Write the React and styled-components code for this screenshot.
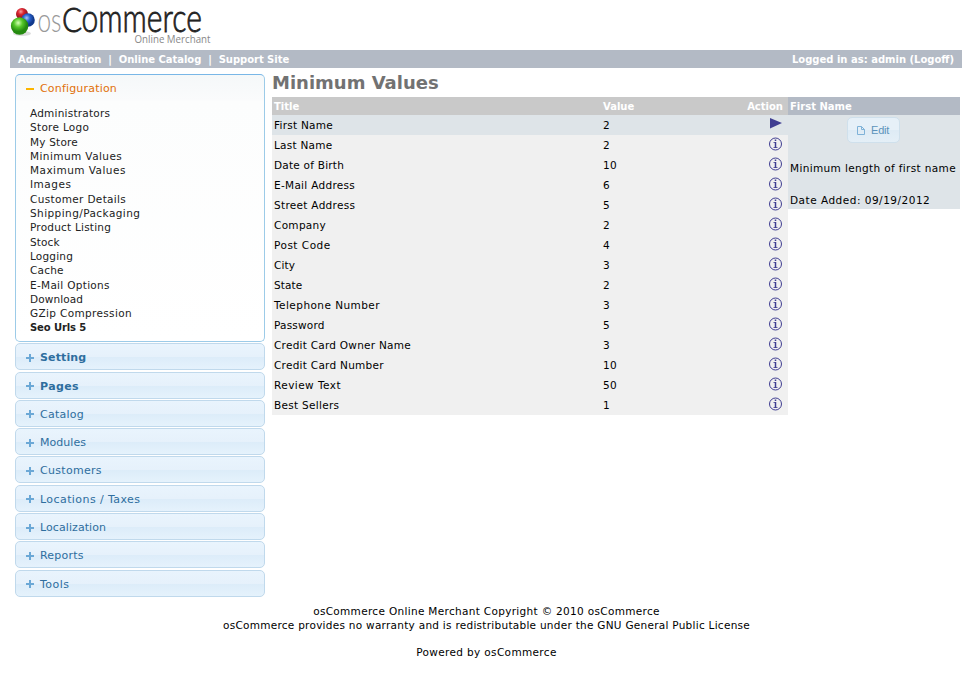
import React from "react";
import styled, { createGlobalStyle } from "styled-components";

const Global = createGlobalStyle`
  * { box-sizing: border-box; }
  body { margin: 0; background: #fff; color: #000; font: 11px/14px "DejaVu Sans", Verdana, sans-serif; }
  h1, ul { margin: 0; padding: 0; }
  ul { list-style: none; }
`;

const Page = styled.div`width: 972px; height: 688px; padding: 0 12px 0 10px; overflow: hidden;`;
const Header = styled.header`height: 50px;`;
const Logo = styled.svg`display: block; width: 210px; height: 50px; overflow: visible;`;
const Bar = styled.nav`
  width: 952px; height: 18px; padding: 0 8px; display: flex; justify-content: space-between;
  background: #b3bac5; color: #fff; font-weight: bold; font-size: 10px; line-height: 19px; white-space: pre;
`;
const BarText = styled.span`letter-spacing: ${p => p.$ls || 0}px;`;
const Body = styled.div`display: flex; height: 529px; padding: 6px 0 0 5px;`;
const Sidebar = styled.aside`width: 250px; margin-right: 7px; flex: none;`;
const Section = styled.section`
  height: 268px; border: 1px solid #9ccbe8; border-top-color: #79b7e7; border-radius: 5px;
  background: linear-gradient(#f5f8f9 0, #fafbfc 25px, #fcfdfd 26px, #fff 100%);
`;
const SectionTitle = styled.div`
  height: 31px; padding: 5px 0 0 10px; display: flex; color: #e17009; font-size: 11px; line-height: 17px; letter-spacing: .18px;
`;
const Sign = styled.svg`width: 8px; height: 8px; margin: ${p => p.$top}px 6px 0 0; flex: none;`;
const Links = styled.ul`padding-left: 14px;`;
const Link = styled.li`
  height: 14.3px; line-height: ${p => (p.$bold ? 16.3 : 14.3)}px; color: #222; font-weight: ${p => (p.$bold ? "bold" : "normal")};
  font-size: ${p => (p.$bold ? 10 : 10.5)}px; letter-spacing: ${p => p.$ls}px; white-space: nowrap;
`;
const Menu = styled.div`
  height: 27px; margin-top: 1.3px; padding: 5px 0 0 10px; display: flex; border: 1px solid #c0d9ec; border-radius: 5px;
  background: linear-gradient(#e9f4fd 0, #e6f1fb 50%, #dcecf9 51%, #e5f2fc 100%);
  color: #2e6e9e; font-size: 11px; line-height: 17px; font-weight: ${p => (p.$bold ? "bold" : "normal")};
  letter-spacing: ${p => p.$ls}px;
`;
const Main = styled.main`width: 688px;`;
const Heading = styled.h1`height: 23px; color: #727272; font-size: 18px; line-height: 18px;`;
const Columns = styled.div`display: flex; align-items: flex-start;`;
const Table = styled.div`width: 516px; font-size: 10.5px;`;
const Row = styled.div`
  display: grid; grid-template-columns: 329px 105px 1fr; height: 20px; padding: 0 5px 0 2px; line-height: 21px;
  background: ${p => (p.$active ? "#dee4e8" : "#f0f0f0")};
`;
const HeadRow = styled(Row)`height: 18px; background: #c9c9c9; color: #fff; font-weight: bold; font-size: 10px; line-height: 19px;`;
const Cell = styled.span`letter-spacing: ${p => p.$ls || 0}px; white-space: nowrap;`;
const Action = styled.span`display: flex; justify-content: flex-end;`;
const ActionIcon = styled.svg`width: 14px; height: 14px; margin-top: 2px;`;
const Info = styled.aside`width: 172px; height: 112px; background: #dee4e8; font-size: 10.5px;`;
const InfoHead = styled.div`height: 18px; padding-left: 2px; background: #b3bac5; color: #fff; font-weight: bold; font-size: 10px; line-height: 19px;`;
const Button = styled.button`
  display: flex; align-items: center; width: 53px; height: 26px; margin: 2px 0 0 59px; padding: 0 0 0 9px; gap: 6px;
  border: 1px solid #cfe0ec; border-radius: 5px; background: linear-gradient(#e6f0f8 0 48%, #deebf5 52%, #e4eff7);
  color: #5b93bb; font: 11px "Liberation Sans", Arial, sans-serif; letter-spacing: -.2px;
`;
const Paper = styled.svg`width: 8px; height: 9px;`;
const InfoText = styled.div`margin: ${p => p.$top}px 0 0 2px; line-height: 14px; letter-spacing: ${p => p.$ls}px; white-space: nowrap;`;
const Footer = styled.footer`width: 953px; padding-top: 7px; text-align: center; font-size: 10.5px; line-height: 14px;`;
const FootLine = styled.div`letter-spacing: ${p => p.$ls}px; margin-top: ${p => p.$top || 0}px;`;

const links = [
  ["Administrators", 0.22], ["Store Logo", 0.3], ["My Store", 0.2], ["Minimum Values", 0.42], ["Maximum Values", 0.46], ["Images", 0.5],
  ["Customer Details", 0.34], ["Shipping/Packaging", 0.43], ["Product Listing", 0.22], ["Stock", 0.1], ["Logging", 0.2], ["Cache", 0.2],
  ["E-Mail Options", 0.3], ["Download", 0.1], ["GZip Compression", 0.35], ["Seo Urls 5", -0.1],
];
const menus = [["Setting", 0.14], ["Pages", 0.4], ["Catalog", 0.25], ["Modules", 0.04], ["Customers", 0.3], ["Locations / Taxes", 0.42], ["Localization", 0.08], ["Reports", 0.2], ["Tools", 0.5]];
const rows = [
  ["First Name", 2, 0.25], ["Last Name", 2, 0.25], ["Date of Birth", 10, 0.23], ["E-Mail Address", 6, 0.3], ["Street Address", 5, 0.3],
  ["Company", 2, 0.3], ["Post Code", 4, 0.5], ["City", 3, 0.1], ["State", 2, 0.1], ["Telephone Number", 3, 0.45], ["Password", 5, 0.2],
  ["Credit Card Owner Name", 3, 0.25], ["Credit Card Number", 10, 0.27], ["Review Text", 50, 0.45], ["Best Sellers", 1, 0.3],
];

function Brand() {
  return (
    <Logo viewBox="10 0 210 50">
      <defs>
        <radialGradient id="red" cx=".4" cy=".3"><stop offset="0" stopColor="#f6a0a0" /><stop offset=".5" stopColor="#d9232e" /><stop offset="1" stopColor="#9b1520" /></radialGradient>
        <radialGradient id="blue" cx=".4" cy=".35"><stop offset="0" stopColor="#a9c9f5" /><stop offset=".5" stopColor="#2b62cf" /><stop offset="1" stopColor="#123a8c" /></radialGradient>
        <radialGradient id="green" cx=".42" cy=".32"><stop offset="0" stopColor="#d5ffb5" /><stop offset=".5" stopColor="#55c829" /><stop offset="1" stopColor="#258a10" /></radialGradient>
      </defs>
      <ellipse cx="22" cy="33.500" rx="9" ry="2.500" fill="#ddd" />
      <circle cx="22" cy="14" r="6" fill="url(#red)" />
      <circle cx="28" cy="20" r="6.800" fill="url(#blue)" />
      <circle cx="19.600" cy="26" r="8.700" fill="url(#green)" />
      <g fontFamily="Lato" fontWeight="300">
        <text x="37.500" y="32" fontSize="34" fill="#999" textLength="24" lengthAdjust="spacingAndGlyphs">os</text>
        <text x="62" y="32" fontSize="33" fill="#222" stroke="#222" strokeWidth=".8" textLength="20" lengthAdjust="spacingAndGlyphs">C</text>
        <text x="81.500" y="32" fontSize="40" fill="#222" stroke="#222" strokeWidth=".8" textLength="120.500" lengthAdjust="spacingAndGlyphs">ommerce</text>
      </g>
      <text x="134.500" y="43" fontFamily="Open Sans" fontSize="10" fill="#888" textLength="76" lengthAdjust="spacingAndGlyphs">Online Merchant</text>
    </Logo>
  );
}

function InfoIcon() {
  return (
    <ActionIcon viewBox="0 0 14 14" fill="none" stroke="#3f3d91">
      <circle cx="6.500" cy="7" r="6" />
      <path d="M6.500 2.500v1.500M6.500 5v6" strokeWidth="1.500" />
      <path d="M4.500 5.500h2M4.500 10.500h4" strokeWidth=".8" />
    </ActionIcon>
  );
}

export default function App() {
  return (
    <Page>
      <Global />
      <Header><Brand /></Header>
      <Bar>
        <BarText $ls={-0.035}>Administration  |  Online Catalog  |  Support Site</BarText>
        <BarText>Logged in as: admin (Logoff)</BarText>
      </Bar>
      <Body>
        <Sidebar>
          <Section>
            <SectionTitle><Sign $top={5} viewBox="0 0 8 8"><path d="M0 4h8" stroke="#fcb500" strokeWidth="2" /></Sign>Configuration</SectionTitle>
            <Links>{links.map(([t, ls]) => <Link key={t} $ls={ls} $bold={t === "Seo Urls 5"}>{t}</Link>)}</Links>
          </Section>
          {menus.map(([t, ls], i) => (
            <Menu key={t} $bold={i < 2} $ls={ls}><Sign $top={4.5} viewBox="0 0 8 8"><path d="M0 4h8M4 0v8" stroke="#6ba8d6" strokeWidth="2" /></Sign>{t}</Menu>
          ))}
        </Sidebar>
        <Main>
          <Heading>Minimum Values</Heading>
          <Columns>
            <Table>
              <HeadRow><Cell>Title</Cell><Cell>Value</Cell><Action>Action</Action></HeadRow>
              {rows.map(([t, v, ls], i) => (
                <Row key={t} $active={i === 0}>
                  <Cell $ls={ls}>{t}</Cell><Cell $ls={0.2}>{v}</Cell>
                  <Action>{i === 0 ? <ActionIcon viewBox="0 0 14 14"><path d="M1 1L13 6 1 11.500z" fill="#3f3d91" /></ActionIcon> : <InfoIcon />}</Action>
                </Row>
              ))}
            </Table>
            <Info>
              <InfoHead>First Name</InfoHead>
              <Button><Paper viewBox="0 0 8 9" fill="none" stroke="#7fb2d8"><path d="M.5.500h4l3 3v5h-7zM4.500.500v3h3" /></Paper>Edit</Button>
              <InfoText $top={18} $ls={0.36}>Minimum length of first name</InfoText>
              <InfoText $top={18} $ls={0.5}>Date Added: 09/19/2012</InfoText>
            </Info>
          </Columns>
        </Main>
      </Body>
      <Footer>
        <FootLine $ls={0.32}>osCommerce Online Merchant Copyright © 2010 osCommerce</FootLine>
        <FootLine $ls={0.27}>osCommerce provides no warranty and is redistributable under the GNU General Public License</FootLine>
        <FootLine $top={13} $ls={0.35}>Powered by osCommerce</FootLine>
      </Footer>
    </Page>
  );
}
